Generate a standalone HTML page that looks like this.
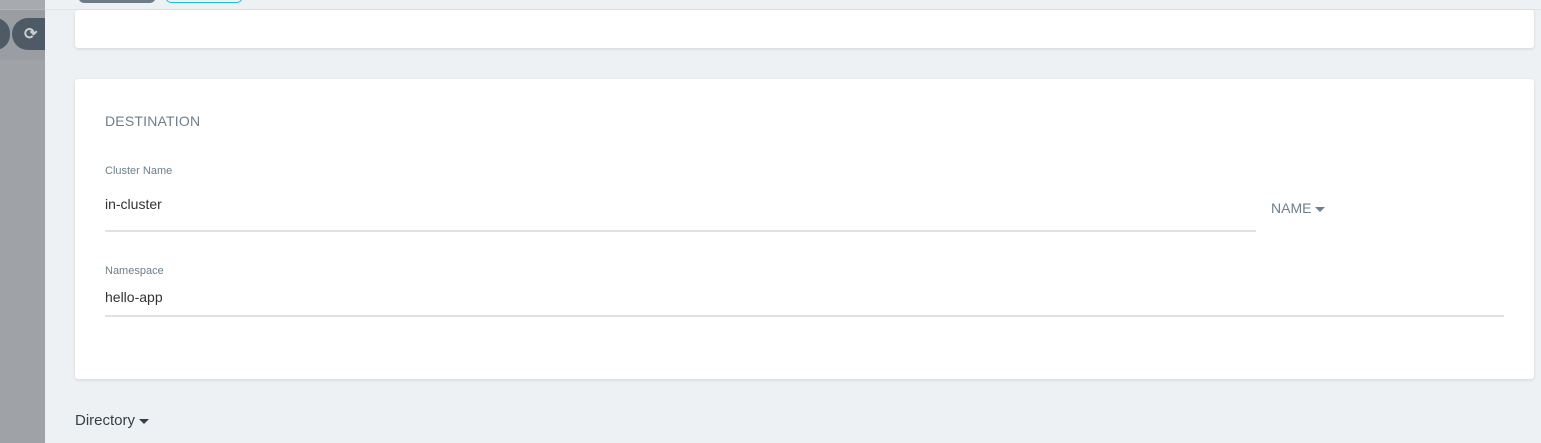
<!DOCTYPE html>
<html><head><meta charset="utf-8"><style>
*{box-sizing:border-box;margin:0;padding:0}
body{width:1541px;height:443px;overflow:hidden;background:#eef1f4;font-family:"Liberation Sans",sans-serif;position:relative}
.left{position:absolute;left:0;top:0;width:45px;height:443px;background:#9fa3a7;overflow:hidden}
.left .top{position:absolute;left:0;top:0;width:45px;height:10px;background:#a7abae;border-bottom:1px solid #b3b6b9}
.left .bar{position:absolute;left:0;top:10px;width:45px;height:50px;background:#9a9ea2}
.pill{position:absolute;background:#4e5b66;border-radius:16px}
.topstrip{position:absolute;left:45px;top:0;width:1496px;height:10px;background:#eef1f4;border-bottom:1px solid #dfe3e7}
.card{position:absolute;left:75px;width:1459px;background:#fff;border-radius:3px;box-shadow:0 1px 3px rgba(0,0,0,.12)}
.lbl{position:absolute;font-size:11px;color:#6d7f8b}
.val{position:absolute;font-size:14px;color:#333}
.line{position:absolute;height:2px;background:#dde2e7}
.caret{display:inline-block;width:0;height:0;border-left:5px solid transparent;border-right:5px solid transparent;border-top:5px solid currentColor;vertical-align:middle;margin-left:4px}
</style></head><body>
<div class="left"><div class="top"></div><div class="bar"></div>
<div class="pill" style="left:-20px;top:18px;width:30px;height:32px"></div>
<div class="pill" style="left:12px;top:18px;width:50px;height:32px"></div>
<div style="position:absolute;left:24px;top:24px;color:#c8cdd1;font-size:16px;font-weight:bold">⟳</div>
</div>
<div class="topstrip">
<div style="position:absolute;left:33px;top:-10px;width:78px;height:13px;background:#6d7c88;border-radius:8px"></div>
<div style="position:absolute;left:120px;top:-10px;width:78px;height:13px;border:1px solid #18c3d4;border-radius:8px"></div>
</div>
<div class="card" style="top:10px;height:38px"></div>
<div class="card" style="top:79px;height:300px">
<div style="position:absolute;left:30px;top:34px;font-size:14px;color:#6d7f8b;letter-spacing:.2px">DESTINATION</div>
<div class="lbl" style="left:30px;top:86px">Cluster Name</div>
<div class="val" style="left:30px;top:117px">in-cluster</div>
<div class="line" style="left:30px;top:151px;width:1151px"></div>
<div style="position:absolute;left:1196px;top:121px;font-size:14px;color:#6d7f8b">NAME<span class="caret"></span></div>
<div class="lbl" style="left:30px;top:186px">Namespace</div>
<div class="val" style="left:30px;top:210px">hello-app</div>
<div class="line" style="left:30px;top:236px;width:1399px"></div>
</div>
<div style="position:absolute;left:75px;top:412px;font-size:15px;color:#363f48">Directory<span class="caret" style="color:#363f48"></span></div>
</body></html>
